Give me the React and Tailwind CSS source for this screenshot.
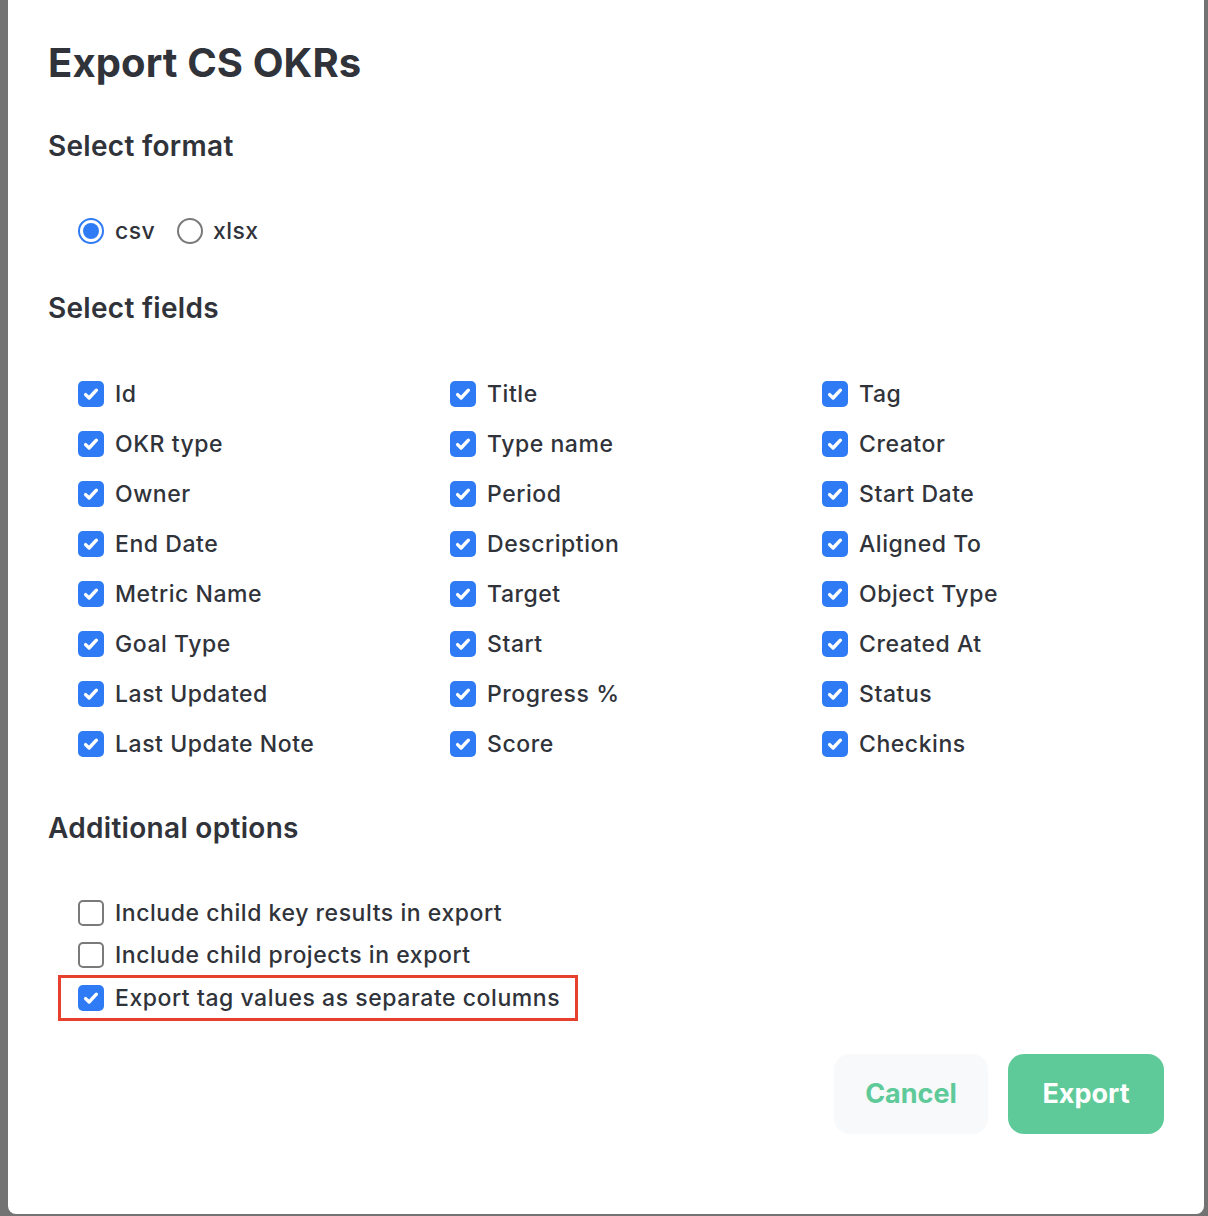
import { useState } from "react";

const fields = [
  ["Id", "Title", "Tag"],
  ["OKR type", "Type name", "Creator"],
  ["Owner", "Period", "Start Date"],
  ["End Date", "Description", "Aligned To"],
  ["Metric Name", "Target", "Object Type"],
  ["Goal Type", "Start", "Created At"],
  ["Last Updated", "Progress %", "Status"],
  ["Last Update Note", "Score", "Checkins"],
];

const Check = ({ checked }) =>
  checked ? (
    <span className="w-[26px] h-[26px] rounded-[5px] bg-[#2f7bf5] flex items-center justify-center shrink-0">
      <svg width="18" height="18" viewBox="0 0 18 18" fill="none">
        <path
          d="M3.6 9.6l3.5 3.4L14.4 5.2"
          stroke="white"
          strokeWidth="3.4"
          strokeLinecap="round"
          strokeLinejoin="round"
        />
      </svg>
    </span>
  ) : (
    <span className="w-[26px] h-[26px] rounded-[5px] border-2 border-[#7a7a7a] bg-white shrink-0" />
  );

const Radio = ({ checked }) =>
  checked ? (
    <span className="w-[26px] h-[26px] rounded-full border-2 border-[#2f7bf5] flex items-center justify-center shrink-0">
      <span className="w-[16px] h-[16px] rounded-full bg-[#2f7bf5]" />
    </span>
  ) : (
    <span className="w-[26px] h-[26px] rounded-full border-2 border-[#7a7a7a] shrink-0" />
  );

export default function App() {
  const [format] = useState("csv");

  return (
    <div
      className="w-full h-[1216px] bg-[#737373] overflow-hidden"
      style={{ fontFamily: "Inter, 'Noto Sans', sans-serif" }}
    >
      <div className="ml-[8px] w-[1196px] h-[1214px] bg-white rounded-b-[8px] pl-[40px] pr-[40px] text-[#30333a]">
        <h1 className="pt-[39px] h-[87px] text-[40px] leading-[48px] font-bold tracking-[0.1px]">
          Export CS OKRs
        </h1>

        <h2 className="mt-[42px] h-[34px] flex items-center text-[28px] font-semibold tracking-[0.3px]">
          Select format
        </h2>

        <div className="mt-[53px] h-[30px] pl-[30px] flex items-center text-[23px] font-medium tracking-[0.4px]">
          <label className="flex items-center gap-[11px]">
            <Radio checked={format === "csv"} />
            <span>csv</span>
          </label>
          <label className="flex items-center gap-[10px] ml-[22px]">
            <Radio checked={format === "xlsx"} />
            <span>xlsx</span>
          </label>
        </div>

        <h2 className="mt-[45px] h-[34px] flex items-center text-[28px] font-semibold tracking-[0.3px]">
          Select fields
        </h2>

        <div className="mt-[44px] pl-[30px] grid grid-cols-[372px_372px_372px]">
          {fields.map((row) =>
            row.map((f) => (
              <label
                key={f}
                className="h-[50px] flex items-center gap-[11px] text-[23px] font-medium tracking-[0.55px]"
              >
                <Check checked />
                <span>{f}</span>
              </label>
            ))
          )}
        </div>

        <h2 className="mt-[42px] h-[34px] flex items-center text-[28px] font-semibold tracking-[0.3px]">
          Additional options
        </h2>

        <div className="mt-[47px] text-[23px] font-medium tracking-[0.55px]">
          <label className="pl-[30px] h-[42px] flex items-center gap-[11px]">
            <Check />
            <span>Include child key results in export</span>
          </label>
          <label className="pl-[30px] h-[42px] flex items-center gap-[11px]">
            <Check />
            <span>Include child projects in export</span>
          </label>
          <label className="ml-[10px] w-[520px] h-[46px] -mt-px pl-[17px] border-[3px] border-[#e8402e] flex items-center gap-[11px]">
            <Check checked />
            <span>Export tag values as separate columns</span>
          </label>
        </div>

        <div className="mt-[33px] flex justify-end gap-[20px]">
          <button className="w-[154px] h-[80px] rounded-[16px] bg-[#f8f9fa] text-[#5fca99] text-[27px] font-bold">
            Cancel
          </button>
          <button className="w-[156px] h-[80px] rounded-[16px] bg-[#5fca99] text-white text-[27px] font-bold">
            Export
          </button>
        </div>
      </div>
    </div>
  );
}
